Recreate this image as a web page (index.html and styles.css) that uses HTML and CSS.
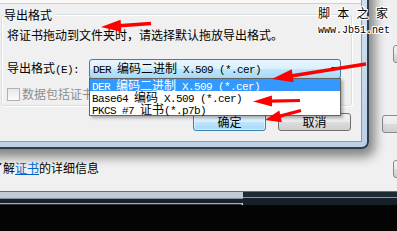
FILE: index.html
```html
<!DOCTYPE html>
<html lang="zh-CN">
<head>
<meta charset="utf-8">
<title>导出格式</title>
<link rel="stylesheet" href="styles.css">
</head>
<body>
<div class="desktop">
  <div class="bgwin">
    <div class="bg-client">
      <div class="bg-main">
        <p class="bg-info">了解<a class="link">证书</a>的详细信息</p>
      </div>
      <div class="bg-side">
        <span class="bg-btn b1"></span>
        <span class="bg-btn b2"></span>
        <span class="bg-btn b3"></span>
      </div>
    </div>
    <div class="bg-frame">
      <div class="seg-left"></div>
      <div class="seg-right"></div>
    </div>
  </div>
  <div class="taskbar"></div>

  <div class="dialog">
    <div class="client">
      <div class="tabstrip"></div>
      <div class="group">
        <span class="legend">导出格式</span>
        <p class="desc">将证书拖动到文件夹时，请选择默认拖放导出格式。</p>
        <div class="row">
          <span class="label">导出格式<span class="m">(E):</span></span>
          <div class="combo">
            <span class="combo-text"><span class="m">DER </span>编码二进制<span class="m"> X.509 (*.cer)</span></span>
            <span class="arrow"></span>
            <ul class="list">
              <li class="sel"><span class="m">DER </span>编码二进制<span class="m"> X.509 (*.cer)</span></li>
              <li><span class="m">Base64 </span>编码<span class="m"> X.509 (*.cer)</span></li>
              <li><span class="m">PKCS #7 </span>证书<span class="m">(*.p7b)</span></li>
            </ul>
          </div>
        </div>
        <div class="check-row">
          <span class="checkbox"></span><span class="check-label">数据包括证书路径中的所有证书</span>
        </div>
      </div>
      <div class="buttons">
        <button class="btn default">确定</button>
        <button class="btn">取消</button>
      </div>
    </div>
  </div>

  <div class="watermark">
    <p class="wm-title">脚本之家</p>
    <p class="wm-url">www.Jb51.net</p>
  </div>

  <svg class="arrows" width="397" height="231" viewBox="0 0 397 231">
    <g fill="#ff0000" stroke="none">
      <line x1="151" y1="23.5" x2="119" y2="25.8" stroke="#ff0000" stroke-width="3.5"/>
      <polygon points="101,27 121.4,32 120.6,19.8"/>
      <line x1="366" y1="64" x2="291" y2="76" stroke="#ff0000" stroke-width="3.5"/>
      <polygon points="272,79 293.7,82.3 291.7,69.3"/>
      <line x1="300" y1="100.5" x2="270" y2="101.1" stroke="#ff0000" stroke-width="3.2"/>
      <polygon points="253,101.5 272.1,106.6 271.9,95.6"/>
      <line x1="301" y1="110.5" x2="279" y2="116.4" stroke="#ff0000" stroke-width="3.2"/>
      <polygon points="265,120 281.9,122.2 279.3,110.6"/>
    </g>
  </svg>
</div>
</body>
</html>
```

FILE: styles.css
```css
* {
  box-sizing: border-box;
  margin: 0;
  padding: 0;
}

html, body {
  width: 397px;
  height: 231px;
  overflow: hidden;
}

body {
  background: #f0f0f0;
  font-family: "Noto Sans CJK SC", "Noto Sans", sans-serif;
  font-size: 12px;
  line-height: 14px;
  color: #000;
}

.m {
  font-family: "Liberation Mono", "DejaVu Sans Mono", monospace;
  font-size: 11px;
  letter-spacing: -0.6px;
}

.desktop {
  position: relative;
  width: 397px;
  height: 231px;
  overflow: hidden;
  display: flex;
  flex-direction: column;
}

/* background window */
.bgwin {
  flex: none;
  height: 205px;
  display: flex;
  flex-direction: column;
}

.bg-client {
  height: 191px;
  display: flex;
  background: #f0f0f0;
}

.bg-main {
  flex: 1;
  padding-top: 161px;
  margin-left: -9px;
}

.bg-info {
  white-space: nowrap;
}

.link {
  color: #0066cc;
  text-decoration: underline;
}

.bg-side {
  flex: none;
  width: 15px;
  display: flex;
  flex-direction: column;
  align-items: flex-start;
  overflow: hidden;
}

.bg-btn {
  display: block;
  flex: none;
  width: 40px;
  height: 18px;
  border: 1px solid #8a8a8a;
  border-radius: 3px;
  background: linear-gradient(#f2f2f2, #ebebeb 50%, #dddddd 50%, #cfcfcf);
}

.b1 { margin-top: 45px; margin-left: 11px; }
.b2 { margin-top: 52px; }
.b3 { margin-top: 27px; margin-left: 11px; }

.bg-frame {
  height: 14px;
  display: flex;
}

.seg-left {
  width: 243px;
  border-bottom-right-radius: 3px;
  background: linear-gradient(to bottom,
    #6c6c6c 0 1px,
    #c2cbd3 1px 7px,
    #8c949c 7px 8px,
    #18222c 8px 12px,
    #a4acb4 12px 13px,
    #2a323a 13px 14px);
}

.seg-right {
  flex: 1;
  background: linear-gradient(to bottom,
    #6c6c6c 0 1px,
    #1e2a34 1px 6px,
    #8a98a4 6px 7px,
    #16202a 7px 14px);
}

.taskbar {
  flex: 1;
  background: #040404;
}

/* front dialog */
.dialog {
  position: absolute;
  left: -16px;
  top: -22px;
  width: 385px;
  height: 171px;
  border: 1px solid #2f3d4b;
  border-width: 1px 2px 2px 1px;
  border-radius: 0 0 7px 7px;
  background: linear-gradient(#d3e2f1, #bcd1e6);
  padding: 0 5px 5px 6px;
  box-shadow: 3px 5px 11px 3px rgba(0, 0, 0, 0.45);
}

.client {
  height: 100%;
  background: #f0f0f0;
  border: 1px solid #8d9bab;
}

.tabstrip {
  height: 24px;
  background: #f8f8f8;
  border-bottom: 1px solid #cfcfcf;
}

.group {
  margin: 10px 9px 0 9px;
  border: 1px solid #d5dfe5;
  border-radius: 3px;
  padding: 0 5px 4px 5px;
  box-shadow: inset 1px 1px 0 #fff, 1px 1px 0 #fff;
}

.legend {
  display: block;
  width: fit-content;
  margin: -7px 0 0 -4px;
  padding: 0 2px 0 1px;
  background: #f0f0f0;
}

.desc {
  margin-top: 6px;
  white-space: nowrap;
}

.row {
  display: flex;
  align-items: center;
  height: 20px;
  margin-top: 17px;
}

.label {
  flex: none;
  width: 82px;
  white-space: nowrap;
}

.combo {
  position: relative;
  flex: none;
  width: 252px;
  height: 20px;
  border: 1px solid #3c7fb1;
  border-radius: 3px;
  background: linear-gradient(#eaf6fd, #d9f0fc 50%, #bee6fd 50%, #a7d9f5);
  padding-left: 3px;
  display: flex;
  align-items: center;
}

.combo-text {
  flex: 1;
  white-space: nowrap;
}

.arrow {
  flex: none;
  width: 0;
  height: 0;
  margin-right: 3px;
  border-top: 4px solid #1a1a1a;
  border-left: 3.5px solid transparent;
  border-right: 3.5px solid transparent;
}

.list {
  position: absolute;
  left: -1px;
  top: 18px;
  width: 252px;
  list-style: none;
  background: #fff;
  border: 1px solid #646464;
  box-shadow: 2px 2px 3px rgba(0, 0, 0, 0.3);
}

.list li {
  height: 12px;
  line-height: 12px;
  padding-left: 2px;
  white-space: nowrap;
}

.list li.sel {
  background: #3399ff;
  color: #fff;
}

.check-row {
  display: flex;
  align-items: center;
  height: 14px;
  margin-top: 8px;
}

.checkbox {
  flex: none;
  width: 13px;
  height: 13px;
  margin-right: 2px;
  border: 1px solid #b1b1b1;
  background: linear-gradient(#e8e8e8, #fcfcfc);
}

.check-label {
  color: #8d8d8d;
  white-space: nowrap;
}

.buttons {
  display: flex;
  justify-content: flex-end;
  gap: 12px;
  margin: 7px 10px 0 0;
}

.btn {
  width: 73px;
  height: 18px;
  font: inherit;
  line-height: 16px;
  color: #000;
  border: 1px solid #707070;
  border-radius: 3px;
  background: linear-gradient(#f2f2f2, #ebebeb 50%, #dddddd 50%, #cfcfcf);
}

.btn.default {
  border-color: #3c7fb1;
  background: linear-gradient(#eaf6fd, #d9f0fc 50%, #bee6fd 50%, #a7d9f5);
  box-shadow: inset 0 0 0 1px rgba(255, 255, 255, 0.5);
}

/* watermark overlay */
.watermark {
  position: absolute;
  left: 318px;
  top: 6px;
  color: #000;
  text-shadow: 1px 0 0 #fff, -1px 0 0 #fff, 0 1px 0 #fff, 0 -1px 0 #fff,
    1px 1px 0 #fff, -1px -1px 0 #fff, 1px -1px 0 #fff, -1px 1px 0 #fff;
}

.wm-title {
  font-size: 12px;
  line-height: 14px;
  letter-spacing: 7.3px;
  white-space: nowrap;
}

.wm-url {
  margin-top: 5px;
  font-family: "Liberation Mono", "DejaVu Sans Mono", monospace;
  font-size: 10px;
  line-height: 12px;
  white-space: nowrap;
}

.arrows {
  position: absolute;
  left: 0;
  top: 0;
  pointer-events: none;
}
```
